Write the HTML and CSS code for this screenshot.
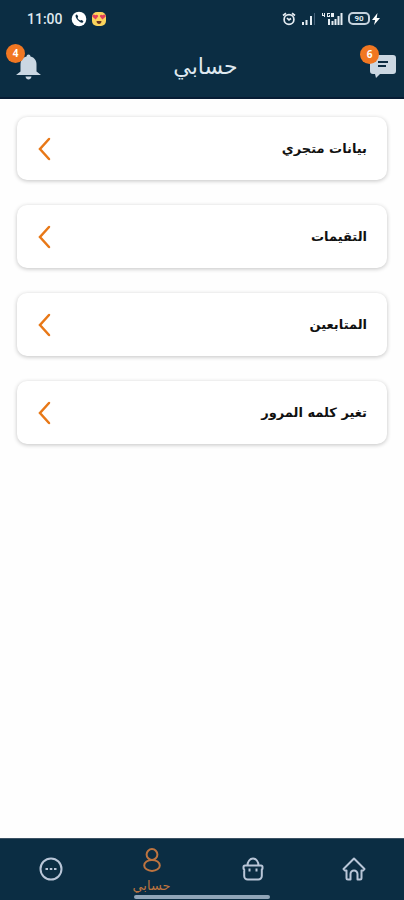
FILE: index.html
```html
<!DOCTYPE html>
<html lang="ar" dir="rtl">
<head>
<meta charset="utf-8">
<meta name="viewport" content="width=device-width, initial-scale=1">
<title>حسابي</title>
<link rel="stylesheet" href="styles.css">
</head>
<body>
<header class="top">
  <div class="status" dir="ltr">
    <div class="status-group">
      <span class="clock">11:00</span>
      <svg class="app-icon" viewBox="0 0 16 16" aria-hidden="true"><circle cx="8" cy="8" r="7.3" fill="#fff"/><path d="M4.6 4.2c.8-.9 1.5-.7 1.9.1l.6 1.2c.2.5-.3.9-.6 1.3.6 1.300 1.500 2.200 2.800 2.800.4-.4.800-.9 1.300-.6l1.200.7c.7.4.7 1.100-.1 1.800-1.800 1.400-7.900-4.300-7.100-7.300z" fill="#0c2c42"/></svg>
      <svg class="app-icon" viewBox="0 0 16 16" aria-hidden="true"><rect x="1" y="1" width="14" height="14" rx="5" fill="#fbd45c"/><path d="M4.600 8.500 1.500 5.700c-.7-2 1.600-3 2.700-1.400 1.300-1.400 3.200-.4 2.900 1.200zM11.400 8.500 8.900 5.500c-.3-1.600 1.600-2.600 2.900-1.200 1.100-1.600 3.400-.6 2.700 1.400z" fill="#e2405c"/><path d="M5.500 10h5c0 4-5 4-5 0z" fill="#6a3423"/></svg>
    </div>
    <div class="status-group status-right">
      <svg class="alarm" viewBox="0 0 14 14" aria-hidden="true" fill="none" stroke="#e6edf3" stroke-width="1.700"><circle cx="7" cy="7.500" r="4.900"/><path d="M1 3.500 4 1.300M13 3.500 10 1.300M5 6 7 8l2-1.500"/></svg>
      <svg class="signal" viewBox="0 0 15 14" aria-hidden="true"><path d="M1 10h2v3H1zM4.500 8h2v5h-2zM9 4h2v9H9z" fill="#e6edf3"/><path d="M13 1h1v12h-1z" fill="#45617a"/></svg>
      <svg class="network" viewBox="0 0 22 14" aria-hidden="true" fill="#e6edf3"><path d="M1 1h1v2h1V1h1v4H3V4H1zM6 1h3v1H7v2h1V3h1v2H6zM10 1h3v4h-3zM7 7h2v6H7zM10.500 9h2v4h-2zM13.500 7h2v6h-2zM16.500 4h2v9h-2zM19.500 1h2v12h-2z"/></svg>
      <span class="battery">90</span>
      <svg class="bolt" viewBox="0 0 8 12" aria-hidden="true"><path d="M5.500 0 0 7h3.200L2 12l6-7H4.700z" fill="#fff"/></svg>
    </div>
  </div>
  <div class="appbar">
    <button class="icon-btn" type="button" aria-label="الرسائل">
      <svg class="chat" viewBox="0 0 28 26" aria-hidden="true"><path d="M4 1h20a3 3 0 0 1 3 3v13a3 3 0 0 1-3 3H11l-4 4-1-4H4a3 3 0 0 1-3-3V4a3 3 0 0 1 3-3z" fill="#cbd7e2"/><path d="M9 8h10M9 12h8" stroke="#0c2c42" stroke-width="2"/></svg>
      <span class="badge badge-chat">6</span>
    </button>
    <h1 class="title">حسابي</h1>
    <button class="icon-btn" type="button" aria-label="الإشعارات">
      <svg class="bell" viewBox="0 0 28 28" aria-hidden="true" fill="#cbd7e2"><path d="M14 1.500a2 2 0 0 1 2 2c4 1 6 4 6 8v7l4.500 3.500H1.500L6 18.500v-7c0-4 2-7 6-8a2 2 0 0 1 2-2z"/><path d="M11 23.500h6c-.5 4-5.500 4-6 0z"/></svg>
      <span class="badge badge-bell">4</span>
    </button>
  </div>
</header>

<main class="list">
  <a class="card" href="#"><span>بيانات متجري</span><svg class="chevron" viewBox="0 0 14 24" aria-hidden="true"><path d="M12 2 3 12l9 10"/></svg></a>
  <a class="card" href="#"><span>التقيمات</span><svg class="chevron" viewBox="0 0 14 24" aria-hidden="true"><path d="M12 2 3 12l9 10"/></svg></a>
  <a class="card" href="#"><span>المتابعين</span><svg class="chevron" viewBox="0 0 14 24" aria-hidden="true"><path d="M12 2 3 12l9 10"/></svg></a>
  <a class="card" href="#"><span>تغير كلمه المرور</span><svg class="chevron" viewBox="0 0 14 24" aria-hidden="true"><path d="M12 2 3 12l9 10"/></svg></a>
</main>

<nav class="tabs">
  <a class="tab" href="#" aria-label="الرئيسية"><svg class="tab-icon" viewBox="0 0 24 24" aria-hidden="true"><path d="M1.500 12 12 1.500 22.500 12l-1.500 1.500h-1.500V21a1.500 1.500 0 0 1-1.500 1.500h-2.500V17a3.500 3.500 0 0 0-7 0v5.500H6A1.500 1.500 0 0 1 4.500 21v-7.500H3z"/></svg></a>
  <a class="tab" href="#" aria-label="المنتجات"><svg class="tab-icon" viewBox="0 0 24 24" aria-hidden="true"><path d="M4 8.500h16a1.500 1.500 0 0 1 1.500 1.500v1.500a1 1 0 0 1-.7 1V19a3.500 3.500 0 0 1-3.500 3.500H6.700A3.500 3.500 0 0 1 3.200 19v-6.500a1 1 0 0 1-.7-1V10A1.500 1.500 0 0 1 4 8.500zM6.500 8.500C6.500 4.500 9 1.500 12 1.500s5.500 3 5.500 7M8.500 11.500v3M15.500 11.500v3"/></svg></a>
  <a class="tab tab-active" href="#" aria-current="page"><svg class="tab-icon" viewBox="0 0 24 24" aria-hidden="true"><circle cx="12" cy="6.500" r="5.400"/><ellipse cx="12" cy="17.400" rx="7.800" ry="5.500"/></svg><span>حسابي</span></a>
  <a class="tab" href="#" aria-label="المزيد"><svg class="tab-icon" viewBox="0 0 24 24" aria-hidden="true"><circle cx="12" cy="12" r="10.500"/><path d="M6.500 12h2.500M10.800 12h2.500M15 12h2.500"/></svg></a>
  <span class="home-bar"></span>
</nav>
</body>
</html>
```
FILE: styles.css
```css
* { box-sizing: border-box; }

body {
  margin: 0;
  min-height: 100vh;
  display: flex;
  flex-direction: column;
  background: #fefefe;
  color: #111;
  font-family: "DejaVu Sans", sans-serif;
}

a { color: inherit; text-decoration: none; }

.top {
  background: #0b2d43;
  color: #dfe8ef;
  border-bottom: 2px solid #071c34;
}

.status {
  display: flex;
  justify-content: space-between;
  align-items: center;
  height: 37px;
  padding: 0 24px 0 27px;
}

.status-group { display: flex; align-items: center; gap: 4px; }
.status-right { gap: 5px; }
.clock { font: 500 14px/18px Roboto, sans-serif; margin-right: 4px; }
.app-icon { width: 16px; height: 16px; }
.alarm { width: 14px; height: 14px; }
.signal { width: 15px; height: 14px; }
.network { width: 22px; height: 14px; }

.battery {
  width: 22px;
  height: 13px;
  border: 2px solid #c6d2dd;
  border-radius: 5px;
  font: 700 8px/9px Roboto, sans-serif;
  text-align: center;
}

.bolt { width: 8px; height: 12px; margin-left: -3px; }

.appbar {
  display: grid;
  grid-template-columns: 1fr auto 1fr;
  align-items: center;
  height: 60px;
  padding: 0 7px 0 14px;
}

.title {
  margin: 0;
  font-size: 22px;
  line-height: 28px;
  font-weight: 400;
}

.icon-btn {
  position: relative;
  display: flex;
  justify-self: start;
  padding: 0;
  border: 0;
  background: none;
}

.title + .icon-btn { justify-self: end; }

.chat { width: 28px; height: 26px; }
.bell { width: 29px; height: 28px; }

.badge {
  position: absolute;
  top: -9px;
  width: 19px;
  height: 19px;
  border-radius: 50%;
  background: #f17722;
  color: #fff;
  font: 700 10px/19px "Open Sans", sans-serif;
  text-align: center;
}

.badge-chat { left: -9px; }
.badge-bell { left: -8px; }

.list {
  flex: 1;
  display: flex;
  flex-direction: column;
  gap: 25px;
  padding: 18px 17px;
}

.card {
  display: flex;
  justify-content: space-between;
  align-items: center;
  height: 63px;
  padding: 0 20px;
  border-radius: 10px;
  background: #fff;
  box-shadow: 0 1px 4px rgba(0, 0, 0, 0.24);
  font-size: 13px;
  font-weight: 700;
}

.chevron {
  width: 14px;
  height: 24px;
  fill: none;
  stroke: #e87817;
  stroke-width: 2.5;
  stroke-linecap: round;
}

.tabs {
  position: relative;
  display: flex;
  height: 62px;
  background: #0b2d43;
  color: #b9c6d8;
  border-top: 1px solid #3c5264;
}

.tab {
  flex: 1;
  display: flex;
  flex-direction: column;
  align-items: center;
  justify-content: center;
  padding-bottom: 2px;
  font-size: 13px;
  line-height: 18px;
}

.tab-active {
  gap: 5px;
  padding: 4px 0 0;
  color: #bd7440;
}

.tab-icon {
  width: 24px;
  height: 24px;
  fill: none;
  stroke: currentColor;
  stroke-width: 2;
  stroke-linejoin: round;
}

.home-bar {
  position: absolute;
  bottom: 1px;
  left: 50%;
  width: 136px;
  height: 4px;
  margin-left: -68px;
  border-radius: 2px;
  background: #91a5b8;
}
```
